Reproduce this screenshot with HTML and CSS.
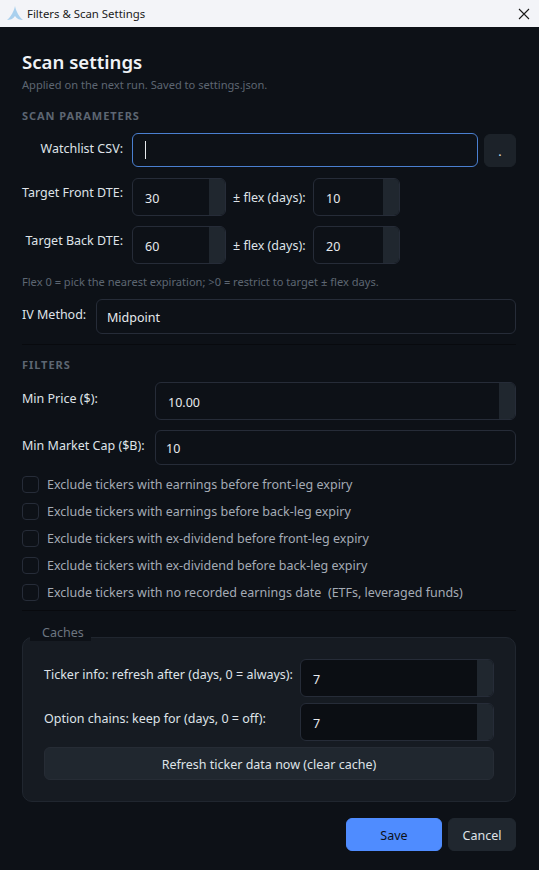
FILE: index.html
```html
<!DOCTYPE html>
<html lang="en">
<head>
    <meta charset="UTF-8">
    <meta name="viewport" content="width=device-width, initial-scale=1.0">
    <title>Filters &amp; Scan Settings</title>
    <link rel="stylesheet" href="styles.css">
</head>
<body>
    <div class="titlebar">
        <svg class="app-icon" width="18" height="18" viewBox="0 0 18 18">
            <path d="M9 1 C10 6 13 12 17 15 C14 15 11 14 9 11 C7 14 4 15 1 15 C5 12 8 6 9 1 Z" fill="#a9d0ee"/>
        </svg>
        <span class="title-text">Filters &amp; Scan Settings</span>
        <svg class="close-icon" width="12" height="12" viewBox="0 0 12 12">
            <path d="M1 1 L11 11 M11 1 L1 11" stroke="#1a1a1a" stroke-width="1.1" fill="none"/>
        </svg>
    </div>

    <div class="dialog">
        <h1>Scan settings</h1>
        <p class="subtitle">Applied on the next run. Saved to settings.json.</p>

        <h2 class="section first">SCAN PARAMETERS</h2>
        <div class="row watch-row">
            <label class="label label-wide">Watchlist CSV:</label>
            <div class="field focused grow"><span class="caret"></span></div>
            <button class="btn browse">.</button>
        </div>
        <div class="row spin-row">
            <label class="label label-wide">Target Front DTE:</label>
            <div class="field spin small"><span class="value">30</span><span class="arrows"></span></div>
            <span class="flex-label">± flex (days):</span>
            <div class="field spin tiny"><span class="value">10</span><span class="arrows"></span></div>
        </div>
        <div class="row spin-row">
            <label class="label label-wide">Target Back DTE:</label>
            <div class="field spin small"><span class="value">60</span><span class="arrows"></span></div>
            <span class="flex-label">± flex (days):</span>
            <div class="field spin tiny"><span class="value">20</span><span class="arrows"></span></div>
        </div>
        <p class="hint">Flex 0 = pick the nearest expiration; &gt;0 = restrict to target ± flex days.</p>
        <div class="row iv-row">
            <label class="label">IV Method:</label>
            <div class="field grow plain"><span class="value">Midpoint</span></div>
        </div>
        <hr class="divider">

        <h2 class="section">FILTERS</h2>
        <div class="row price-row">
            <label class="label label-filter">Min Price ($):</label>
            <div class="field spin grow"><span class="value">10.00</span><span class="arrows"></span></div>
        </div>
        <div class="row cap-row">
            <label class="label label-filter">Min Market Cap ($B):</label>
            <div class="field grow plain"><span class="value">10</span></div>
        </div>

        <ul class="checks">
            <li><span class="box"></span>Exclude tickers with earnings before front-leg expiry</li>
            <li><span class="box"></span>Exclude tickers with earnings before back-leg expiry</li>
            <li><span class="box"></span>Exclude tickers with ex-dividend before front-leg expiry</li>
            <li><span class="box"></span>Exclude tickers with ex-dividend before back-leg expiry</li>
            <li><span class="box"></span>Exclude tickers with no recorded earnings date&nbsp; (ETFs, leveraged funds)</li>
        </ul>
        <hr class="divider checks-divider">

        <div class="caches">
            <span class="legend">Caches</span>
            <div class="row cache-row">
                <label class="label label-cache">Ticker info: refresh after (days, 0 = always):</label>
                <div class="field spin grow dark"><span class="value">7</span><span class="arrows"></span></div>
            </div>
            <div class="row cache-row">
                <label class="label label-cache">Option chains: keep for (days, 0 = off):</label>
                <div class="field spin grow dark"><span class="value">7</span><span class="arrows"></span></div>
            </div>
            <button class="btn refresh">Refresh ticker data now (clear cache)</button>
        </div>

        <div class="actions">
            <button class="btn save">Save</button>
            <button class="btn cancel">Cancel</button>
        </div>
    </div>
</body>
</html>
```

FILE: styles.css
```css
* {
    box-sizing: border-box;
}

body {
    margin: 0;
    height: 870px;
    overflow: hidden;
    background: #0d1117;
    color: #dfe3e8;
    font-family: "Noto Sans", sans-serif;
    font-size: 12.5px;
}

.titlebar {
    height: 27px;
    background: #f3f4f8;
    color: #1a1a1a;
    display: flex;
    align-items: center;
    padding: 0 9px 0 6px;
}

.app-icon {
    margin-right: 3px;
}

.title-text {
    flex: 1;
    font-size: 11.4px;
}

.dialog {
    padding: 22px 23px 0 22px;
}

h1 {
    margin: 0;
    height: 25px;
    line-height: 25px;
    font-size: 18.6px;
    font-weight: 600;
    color: #f0f3f6;
}

.subtitle {
    margin: 3px 0 0;
    height: 16px;
    line-height: 16px;
    font-size: 11.1px;
    color: #5d6672;
}

.section {
    margin: 12px 0 0;
    height: 16px;
    line-height: 16px;
    font-size: 11px;
    font-weight: 700;
    letter-spacing: 0.95px;
    color: #5d6672;
}

.section.first {
    margin-top: 15px;
}

.row {
    display: flex;
    align-items: flex-start;
}

.label {
    display: block;
    line-height: 18px;
    padding-top: 7px;
    color: #dfe3e8;
    white-space: nowrap;
}

.label-wide {
    width: 101px;
    margin-right: 9px;
    text-align: right;
}

.spin-row .label {
    padding-top: 6px;
}

.label-filter {
    width: 133px;
}

.price-row .label {
    padding-top: 8px;
}

.label-cache {
    width: 256px;
    color: #dfe3e8;
}

.field {
    display: flex;
    align-items: center;
    background: #0d1117;
    border: 1px solid #262c38;
    border-radius: 6px;
    overflow: hidden;
}

.grow {
    flex: 1;
}

.value {
    flex: 1;
    padding: 0 12px;
    color: #e6e9ed;
    position: relative;
    top: 1px;
}

.plain .value {
    padding-left: 10px;
}

.arrows {
    align-self: stretch;
    width: 16px;
    background: #20272f;
}

.focused {
    border-color: #4a7fd0;
    height: 34px;
    padding-left: 12px;
}

.caret {
    width: 1px;
    height: 18px;
    background: #e6e9ed;
}

.watch-row {
    margin-top: 9px;
}

.spin-row {
    margin-top: 11px;
    height: 38px;
}

.spin-row + .spin-row {
    margin-top: 10px;
}

.spin {
    height: 38px;
}

.small {
    width: 94px;
}

.tiny {
    width: 87px;
}

.flex-label {
    width: 87px;
    padding: 11px 0 0 7px;
    line-height: 18px;
    white-space: nowrap;
}

.hint {
    margin: 10px 0 0;
    height: 16px;
    line-height: 16px;
    font-size: 11.1px;
    color: #5d6672;
}

.iv-row {
    margin-top: 9px;
}

.iv-row .label {
    width: 74px;
}

.iv-row .field,
.cap-row .field {
    height: 35px;
}

.divider {
    margin: 10px 0 0;
    border: 0;
    height: 1px;
    background: #080a0e;
}

.price-row {
    margin-top: 9px;
}

.cap-row {
    margin-top: 10px;
}

.checks {
    list-style: none;
    margin: 6px 0 0;
    padding: 0;
    color: #a4abb5;
}

.checks li {
    height: 27px;
    display: flex;
    align-items: center;
    white-space: pre;
}

.box {
    width: 17px;
    height: 17px;
    margin-right: 8px;
    border: 1px solid #262c38;
    border-radius: 4px;
}

.checks-divider {
    margin-top: 4px;
}

.caches {
    position: relative;
    margin-top: 26px;
    height: 165px;
    padding: 21px 21px 0;
    background: #161b22;
    border: 1px solid #20262f;
    border-radius: 10px;
}

.legend {
    position: absolute;
    top: -13px;
    left: 7px;
    padding: 0 7px 0 12px;
    line-height: 16px;
    background: #0d1117;
    color: #6c7580;
}

.cache-row {
    height: 38px;
    margin-bottom: 6px;
}

.label-cache + .field {
    flex: 1;
}

.dark {
    background: #0b0e13;
}

.btn {
    font-family: inherit;
    font-size: 12.5px;
    color: #dfe3e8;
    background: #20272f;
    border: 1px solid #20272f;
    border-radius: 6px;
    padding: 2px 0 0;
}

.browse {
    width: 32px;
    height: 33px;
    margin: 1px 0 0 6px;
    background: #1c2229;
    border-color: #1c2229;
}

.refresh {
    width: 100%;
    height: 33px;
    border-color: #262c35;
}

.actions {
    display: flex;
    justify-content: flex-end;
    gap: 6px;
    margin-top: 16px;
}

.save,
.cancel {
    height: 33px;
}

.save {
    width: 96px;
    background: #4f8cff;
    border-color: #4f8cff;
    color: #0d1117;
}

.cancel {
    width: 68px;
}
```
